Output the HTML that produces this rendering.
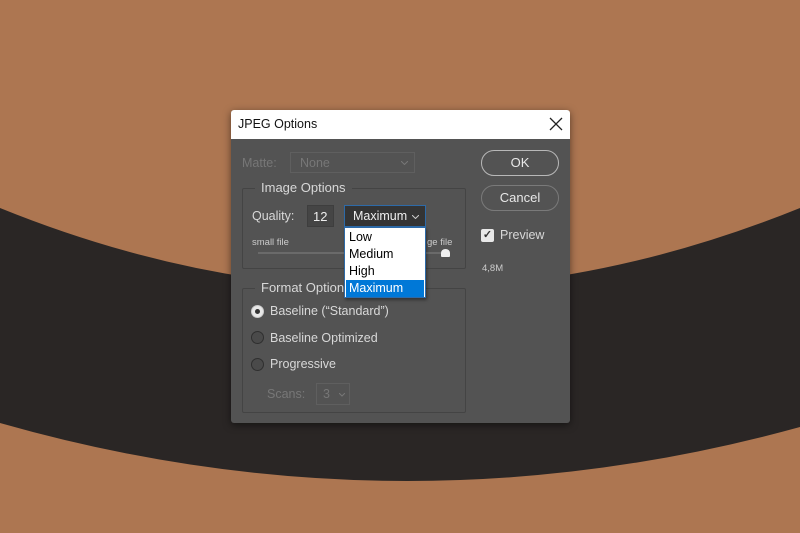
<!DOCTYPE html>
<html><head><meta charset="utf-8"><style>
body{margin:0;width:800px;height:533px;overflow:hidden;position:relative;font-family:"Liberation Sans",sans-serif;background:#ad7651}
.a{position:absolute;white-space:nowrap}
.t{color:#d8d8d8;font-size:12.5px}
.dlg{position:absolute;left:231px;top:110px;width:339px;height:313px;background:#535353;border-radius:3px;box-shadow:0 2px 8px rgba(0,0,0,.5);overflow:hidden}
.title{position:absolute;left:0;top:0;width:339px;height:29px;background:#fff}
.grp{position:absolute;border:1px solid #444;border-radius:2px}
.btn{position:absolute;border:1.5px solid #b8b8b8;border-radius:13px;color:#e8e8e8;font-size:13px;text-align:center;box-sizing:border-box}
.rad{position:absolute;width:11px;height:11px;border:1px solid #2f2f2f;border-radius:50%;background:#4a4a4a}
</style></head><body>
<svg class="a" style="left:0;top:0" width="800" height="533">
<path d="M0,208 Q400,370 800,208 L800,427 Q400,537 0,423 Z" fill="#2a2625"/>
</svg>
<div class="dlg">
 <div class="title"></div>
 <div class="a" style="left:7px;top:7px;font-size:12.5px;color:#111">JPEG Options</div>
 <svg class="a" style="left:318px;top:7px" width="14" height="14"><path d="M1,1 L13,13 M13,1 L1,13" stroke="#222" stroke-width="1.3"/></svg>
 <div class="a" style="left:11px;top:46px;font-size:12.5px;color:#777">Matte:</div>
 <div class="a" style="left:59px;top:42px;width:125px;height:21px;border:1px solid #5f5f5f;box-sizing:border-box;color:#777;font-size:12.5px;padding:3px 9px">None<svg style="position:absolute;right:6px;top:8px" width="7" height="4"><path d="M0,0 L3.5,3.5 L7,0" stroke="#777" fill="none"/></svg></div>
 <div class="grp" style="left:11px;top:78px;width:222px;height:79px"></div>
 <div class="a t" style="left:24px;top:70px;background:#535353;padding:0 6px;font-size:13px">Image Options</div>
 <div class="a t" style="left:21px;top:99px">Quality:</div>
 <div class="a" style="left:76px;top:95px;width:27px;height:22px;background:#454545;border:1px solid #3e3e3e;box-sizing:border-box;color:#eee;font-size:13px;padding:3px 5px">12</div>
 <div class="a" style="left:113px;top:95px;width:82px;height:22px;background:#343434;border:1px solid #2d6aa8;box-sizing:border-box;color:#eee;font-size:12.5px;padding:3px 8px">Maximum<svg style="position:absolute;right:6px;top:9px" width="7" height="4"><path d="M0,0 L3.5,3.5 L7,0" stroke="#ccc" fill="none"/></svg></div>
 <div class="a" style="left:21px;top:127px;font-size:9.5px;color:#ccc">small file</div>
 <div class="a" style="left:196px;top:127px;font-size:9.5px;color:#ccc">ge file</div>
 <div class="a" style="left:27px;top:142px;width:190px;height:2px;background:#6a6a6a"></div>
 <div class="a" style="left:210px;top:139px;width:9px;height:8px;background:#f0f0f0;border-radius:50% 50% 1px 1px"></div>
 <div class="grp" style="left:11px;top:178px;width:222px;height:123px"></div>
 <div class="a t" style="left:24px;top:170px;background:#535353;padding:0 6px;font-size:13px">Format Options</div>
 <div class="rad" style="left:20px;top:195px;background:#e8e8e8;border-color:#ccc"></div>
 <div class="a" style="left:24px;top:199px;width:5px;height:5px;border-radius:50%;background:#333"></div>
 <div class="a t" style="left:39px;top:194px">Baseline (“Standard”)</div>
 <div class="rad" style="left:20px;top:221px"></div>
 <div class="a t" style="left:39px;top:221px">Baseline Optimized</div>
 <div class="rad" style="left:20px;top:248px"></div>
 <div class="a t" style="left:39px;top:247px">Progressive</div>
 <div class="a" style="left:36px;top:277px;font-size:12.5px;color:#777">Scans:</div>
 <div class="a" style="left:85px;top:273px;width:34px;height:22px;border:1px solid #5f5f5f;box-sizing:border-box;color:#777;font-size:12.5px;padding:3px 6px">3<svg style="position:absolute;right:4px;top:9px" width="6" height="4"><path d="M0,0 L3,3 L6,0" stroke="#777" fill="none"/></svg></div>
 <div class="btn" style="left:250px;top:40px;width:78px;height:26px;line-height:23px">OK</div>
 <div class="btn" style="left:250px;top:75px;width:78px;height:26px;line-height:23px;border-color:#7a7a7a">Cancel</div>
 <div class="a" style="left:250px;top:119px;width:13px;height:13px;background:#e8e8e8;border-radius:2px;color:#333;font-size:11px;line-height:13px;text-align:center;font-weight:bold">✓</div>
 <div class="a t" style="left:269px;top:118px">Preview</div>
 <div class="a" style="left:251px;top:153px;font-size:9.5px;color:#ccc">4,8M</div>
</div>
<div class="a" style="left:344px;top:227px;width:82px;height:71px;background:#fff;border:1px solid #2d6aa8;box-sizing:border-box;box-shadow:1px 2px 3px rgba(0,0,0,.4);font-size:12.5px;color:#000">
 <div style="position:absolute;left:4px;top:2px">Low</div>
 <div style="position:absolute;left:4px;top:19px">Medium</div>
 <div style="position:absolute;left:4px;top:36px">High</div>
 <div style="position:absolute;left:1px;top:52px;width:78px;height:17px;background:#0078d7;color:#fff;padding-left:3px;box-sizing:border-box;line-height:17px">Maximum</div>
</div>
</body></html>
